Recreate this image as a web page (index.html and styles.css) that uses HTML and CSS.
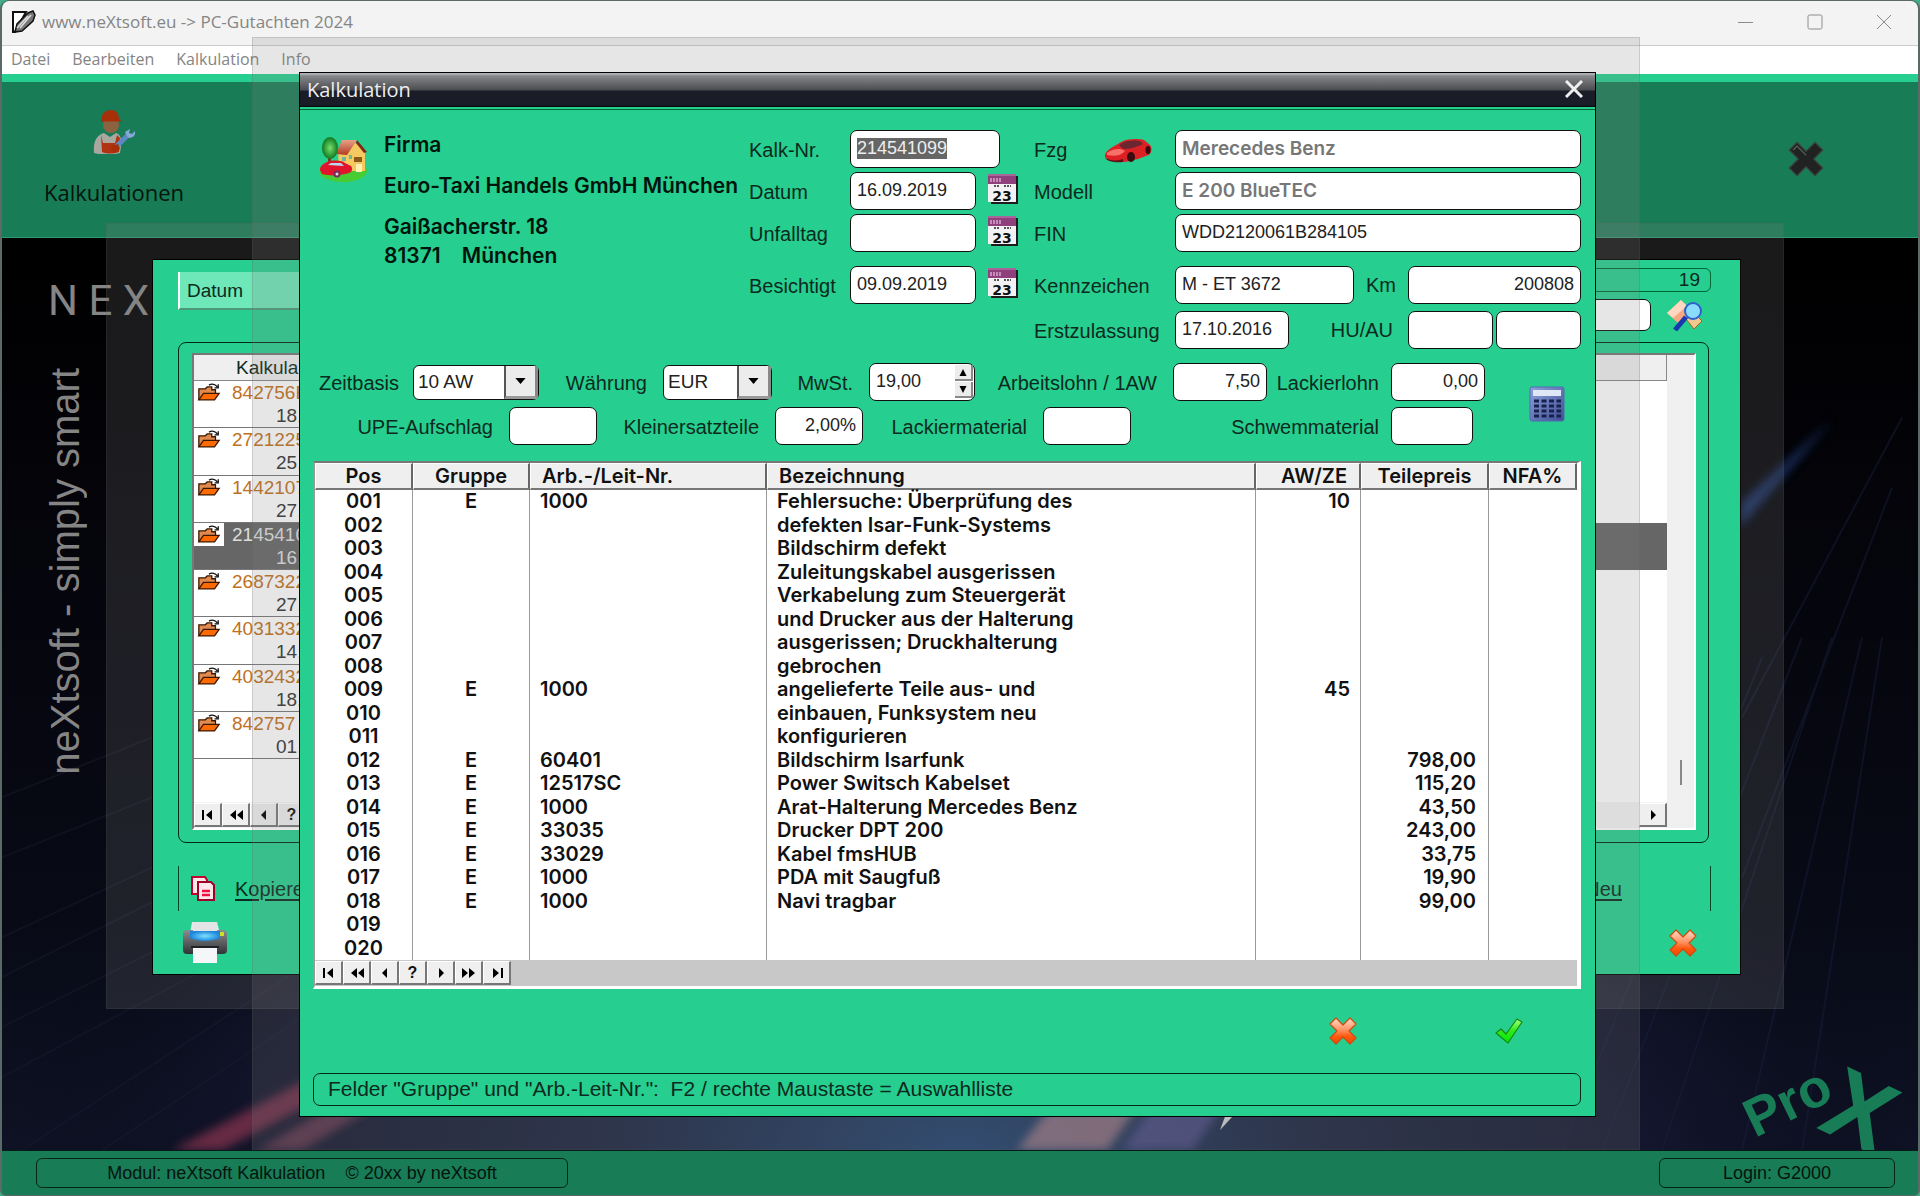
FILE: index.html
```html
<!DOCTYPE html>
<html lang="de">
<head>
<meta charset="utf-8">
<title>www.neXtsoft.eu -&gt; PC-Gutachten 2024</title>
<link rel="stylesheet" href="styles.css">
</head>
<body>
<svg class="defs" width="0" height="0" aria-hidden="true">
  <defs>
    <linearGradient id="gRed" x1="0" y1="0" x2="0" y2="1"><stop offset="0" stop-color="#ffe0cc"/><stop offset=".5" stop-color="#ff8a58"/><stop offset=".7" stop-color="#ff5a10"/><stop offset="1" stop-color="#f04800"/></linearGradient>
    <linearGradient id="gGreen" x1="0" y1="0" x2="0" y2="1"><stop offset="0" stop-color="#a8ff7a"/><stop offset=".5" stop-color="#2fe81c"/><stop offset="1" stop-color="#00e800"/></linearGradient>
    <linearGradient id="gCalc" x1="0" y1="0" x2="1" y2="1"><stop offset="0" stop-color="#8fa2dc"/><stop offset="1" stop-color="#3c4c94"/></linearGradient>
    <linearGradient id="gPrint" x1="0" y1="0" x2="0" y2="1"><stop offset="0" stop-color="#8a8c90"/><stop offset="1" stop-color="#303236"/></linearGradient>
    <linearGradient id="gRoof" x1="0" y1="0" x2="0" y2="1"><stop offset="0" stop-color="#e8a088"/><stop offset="1" stop-color="#b03c20"/></linearGradient>
    <radialGradient id="gTree"><stop offset="0" stop-color="#7ade6c"/><stop offset="1" stop-color="#0c7a20"/></radialGradient>
    <radialGradient id="gBlue"><stop offset="0" stop-color="#7fe0ff"/><stop offset="1" stop-color="#1c86dc"/></radialGradient>
    <symbol id="cross" viewBox="0 0 28 28"><path d="M7 1 L14 8 L21 1 L27 7 L20 14 L27 21 L21 27 L14 20 L7 27 L1 21 L8 14 L1 7 Z" fill="url(#gRed)" stroke="#d04a10" stroke-width="1.2" stroke-linejoin="round"/></symbol>
    <symbol id="cal" viewBox="0 0 30 30">
      <path d="M28 2h2v28H3v-2h25z" fill="#1e1a1e"/><rect width="28" height="28" fill="#f4f1f4"/><rect width="28" height="10" fill="#8e3f7c"/><path d="M0 0h28v2H0z" fill="#a8659a"/>
      <path d="M2 5h12M2 7h11" stroke="#d8a8cc" stroke-width="1.4" stroke-dasharray="2 1"/><path d="M6 12h6M16 12h7" stroke="#555" stroke-width="2" stroke-dasharray="2 1"/>
      <text x="14" y="27" text-anchor="middle" font-family="DejaVu Sans" font-weight="700" font-size="14" fill="#111">23</text></symbol>
    <symbol id="folder" viewBox="0 0 26 20"><path d="M2 18V6h7l2-2h5v3h4v4" fill="#e08a50" stroke="#3a1800" stroke-width="1.4"/><path d="M2 18l5-7h17l-5 7z" fill="#ff6a00" stroke="#3a1800" stroke-width="1.4"/><path d="M13 2c3-2 7-1 9 2M23 1v4h-4" fill="none" stroke="#111" stroke-width="1.4"/></symbol>
    <symbol id="first" viewBox="0 0 14 12"><path d="M1 1h2v10H1zM11 1v10L5 6z"/></symbol>
    <symbol id="rew" viewBox="0 0 14 12"><path d="M7 1v10L1 6zM14 1v10L8 6z"/></symbol>
    <symbol id="prev" viewBox="0 0 14 12"><path d="M9 1v10L4 6z"/></symbol>
    <symbol id="next" viewBox="0 0 14 12"><path d="M5 1v10l5-5z"/></symbol>
    <symbol id="fwd" viewBox="0 0 14 12"><path d="M0 1v10l6-5zM7 1v10l6-5z"/></symbol>
    <symbol id="last" viewBox="0 0 14 12"><path d="M3 1v10l6-5zM11 1h2v10h-2z"/></symbol>
  </defs>
</svg>
<div class="app">
  <header class="titlebar">
    <svg class="app-icon" width="24" height="24" viewBox="0 0 24 24"><path d="M1 2h13L3 22H1z" fill="#fff" stroke="#111" stroke-width="2"/><path d="M3 22l2-8L16 3l5-2 2 4-2 6L10 21z" fill="#777" stroke="#111" stroke-width="1.5"/><path d="M8 18L19 5M5 18L16 6" stroke="#ddd" stroke-width="1.5"/></svg>
    <span class="app-title">www.neXtsoft.eu -&gt; PC-Gutachten 2024</span>
    <div class="win-buttons">
      <button aria-label="Minimieren"><svg width="16" height="16" viewBox="0 0 16 16"><path d="M0 8.500h15"/></svg></button>
      <button aria-label="Maximieren"><svg width="16" height="16" viewBox="0 0 16 16"><rect x="1" y="1" width="14" height="14" rx="1.500"/></svg></button>
      <button aria-label="Schließen"><svg width="16" height="16" viewBox="0 0 16 16"><path d="M1 1l14 14M15 1L1 15"/></svg></button>
    </div>
  </header>
  <nav class="menubar"><a href="#">Datei</a><a href="#">Bearbeiten</a><a href="#">Kalkulation</a><a href="#">Info</a></nav>
  <div class="toolbar">
    <button class="tool">
      <svg width="44" height="44" viewBox="0 0 44 44"><path d="M2 43c-1-12 3-18 10-20l6 4 6-4c6 2 6 8 4 20-6 2-20 2-26 0z" fill="#a8a8a0"/><path d="M9 25l2 8h12l2-8 3 3-1 14c-6 2-12 2-17 0z" fill="#b03412"/><circle cx="19" cy="15" r="8" fill="#8a6440"/><path d="M9 12C9 3 14 0 19 0c6 0 8 5 8 9l3 2c-6 1-14 0-21 1z" fill="#a83008"/><path d="M24 37l12-12" stroke="#5c88c4" stroke-width="5"/><path d="M35 26l-2-4 5-3-1 4 3 1 3-3c1 5-3 7-6 7z" fill="#86a8d8"/><path d="M18 36l8-2 2 5-6 4z" fill="#a83008"/></svg>
      <span>Kalkulationen</span>
    </button>
    <button class="quit" aria-label="Beenden"><svg width="36" height="36" viewBox="0 0 28 28"><path d="M7 1 L14 8 L21 1 L27 7 L20 14 L27 21 L21 27 L14 20 L7 27 L1 21 L8 14 L1 7 Z" fill="#202322" stroke="#3a4440"/><path d="M4 7l3-3 7 7" stroke="#59625e" fill="none"/></svg></button>
  </div>
  <main class="desktop">
    <svg class="wallpaper" viewBox="0 0 1916 913" preserveAspectRatio="none" aria-hidden="true">
      <defs>
        <linearGradient id="w1" x1="0" y1="0" x2="0" y2="1"><stop offset="0" stop-color="#000"/><stop offset=".3" stop-color="#04040a"/><stop offset=".75" stop-color="#080a16"/><stop offset="1" stop-color="#0e1224"/></linearGradient>
        <radialGradient id="w2" cx=".5" cy="1" r=".5"><stop offset="0" stop-color="#20406c"/><stop offset=".35" stop-color="#1a2440"/><stop offset=".75" stop-color="#14162e" stop-opacity=".7"/><stop offset="1" stop-color="#080a16" stop-opacity="0"/></radialGradient>
        <filter id="soft"><feGaussianBlur stdDeviation="5"/></filter>
      </defs>
      <rect width="1916" height="913" fill="url(#w1)"/><rect width="1916" height="913" fill="url(#w2)"/>
      <g stroke="#1a1c30" stroke-width="2" opacity=".45"><path d="M0 700L300 560M0 740L300 590M0 790L300 640M0 840L300 680M20 913L300 730M100 913L300 780M0 620L150 560M0 560L150 500"/><path d="M1740 480L1900 180M1740 640L1890 250M1600 913L1800 400M1660 913L1830 400M1740 913L1860 400M1800 913L1880 400M1560 913L1760 420" stroke="#18203e"/></g>
      <g filter="url(#soft)">
        <path d="M170 913L300 845L340 850L220 913z" fill="#8c3550" opacity=".7"/><path d="M255 913L345 860L385 862L300 913z" fill="#9a4a62" opacity=".5"/>
        <path d="M1738 266L1830 182L1738 290z" fill="#2a4c9c" opacity=".6"/>
        <path d="M1015 913L1060 855L1150 850L1105 913z" fill="#c08890" opacity=".6"/><path d="M1120 913L1160 855L1230 855L1190 913z" fill="#54508c" opacity=".7"/>
      </g>
      <path d="M1218 893L1228 866L1230 880z" fill="#ccc"/>
    </svg>
    <div class="brand">N E X</div>
    <div class="slogan">neXtsoft - simply smart</div>
    <svg class="logo" width="180" height="150" viewBox="0 0 180 150" font-family="Liberation Sans" font-weight="700" fill="#187c56" role="img" aria-label="ProX"><text x="17" y="138" font-size="54" transform="rotate(-26 17 138)">Pro</text><text x="0" y="34" text-anchor="middle" font-size="100" transform="translate(122 111) rotate(25)">X</text></svg>
  </main>
  <footer class="statusbar"><div class="status-left">Modul: neXtsoft Kalkulation &nbsp;&nbsp; © 20xx by neXtsoft</div><div class="status-right">Login: G2000</div></footer>

  <div class="shade shade-list"></div>
  <section class="window list-window" aria-label="Kalkulationsliste">
    <div class="list-top">
      <div class="tab">Datum</div>
      <div class="search"><div class="count">19</div>
        <div class="search-row"><input type="text" aria-label="Suche"><svg width="38" height="32" viewBox="0 0 38 32"><path d="M1 14L15 1l12 12-14 12z" fill="#f8a880"/><path d="M15 1l6 6-14 12-6-5z" fill="#ffd8c0"/><path d="M20 20l8-6 8 8-8 8z" fill="#f2c890" stroke="#9a6a20"/><path d="M20 18L9 31" stroke="#1838b0" stroke-width="5"/><circle cx="27" cy="12" r="8" fill="#8adcff" stroke="#3060d0" stroke-width="2"/></svg></div></div>
    </div>
    <div class="frame">
      <div class="browse">
        <div class="browse-main">
          <table class="calcs">
            <thead><tr><th>Kalkula</th><th></th></tr></thead>
            <tbody>
              <tr><td><div class="rec"><svg><use href="#folder"/></svg><b>842756E</b><i>18.</i></div></td><td></td></tr>
              <tr><td><div class="rec"><svg><use href="#folder"/></svg><b>2721225</b><i>25.</i></div></td><td></td></tr>
              <tr><td><div class="rec"><svg><use href="#folder"/></svg><b>1442107</b><i>27.</i></div></td><td></td></tr>
              <tr class="selected"><td><div class="rec"><svg><use href="#folder"/></svg><b>2145410</b><i>16.</i></div></td><td></td></tr>
              <tr><td><div class="rec"><svg><use href="#folder"/></svg><b>2687322</b><i>27.</i></div></td><td></td></tr>
              <tr><td><div class="rec"><svg><use href="#folder"/></svg><b>4031332</b><i>14.</i></div></td><td></td></tr>
              <tr><td><div class="rec"><svg><use href="#folder"/></svg><b>4032432</b><i>18.</i></div></td><td></td></tr>
              <tr><td><div class="rec"><svg><use href="#folder"/></svg><b>842757</b><i>01.</i></div></td><td></td></tr>
            </tbody>
          </table>
          <div class="navbar"><button aria-label="Anfang"><svg><use href="#first"/></svg></button><button aria-label="Seite zurück"><svg><use href="#rew"/></svg></button><button aria-label="Zurück"><svg><use href="#prev"/></svg></button><button>?</button><button class="to-end" aria-label="Rechts"><svg><use href="#next"/></svg></button></div>
        </div>
        <div class="scroll"><span></span></div>
      </div>
    </div>
    <div class="actions"><svg width="24" height="25" viewBox="0 0 24 25"><path d="M1 1h13l2 3v14H1z" fill="#ffe8ec" stroke="#c00030" stroke-width="2"/><path d="M7 6h13l3 3v15H7z" fill="#ffe8ec" stroke="#a00028" stroke-width="2"/><path d="M11 15h8M11 19h8" stroke="#f01040" stroke-width="2.500"/></svg><a href="#">Kopiere</a><a href="#" class="neu">Neu</a></div>
    <div class="list-foot">
      <button aria-label="Drucken"><svg width="46" height="44" viewBox="0 0 46 44"><path d="M10 1h25l3 12H8z" fill="#e8eaec"/><rect x="1" y="9" width="44" height="24" rx="4" fill="url(#gPrint)"/><path d="M8 10h30v7c-8 4-22 4-30 0z" fill="url(#gBlue)"/><rect x="11" y="1" width="24" height="9" fill="#e2e4e6"/><rect x="38" y="11" width="4" height="4" fill="#c8e020"/><path d="M11 26h24v16H11z" fill="#f4f6f8"/><path d="M9 26h28" stroke="#222" stroke-width="2"/></svg></button>
      <button aria-label="Abbrechen"><svg width="28" height="28"><use href="#cross"/></svg></button>
    </div>
  </section>
  <div class="shade shade-dialog"></div>

  <section class="window dialog" role="dialog" aria-label="Kalkulation">
    <div class="dialog-title"><span>Kalkulation</span><button aria-label="Schließen"><svg width="18" height="18" viewBox="0 0 18 18"><path d="M1 1l16 16M17 1L1 17"/></svg></button></div>
    <form class="dialog-body" onsubmit="return false">
      <div class="head">
        <svg class="house" width="48" height="46" viewBox="0 0 48 46"><ellipse cx="24" cy="34" rx="24" ry="11" fill="#48cc34"/><path d="M19 14L24 5 34 4 46 14V34H20z" fill="#f6c860"/><path d="M17 17L23 3h15L28 18z" fill="url(#gRoof)"/><path d="M38 3l10 12-3 1-8-10" fill="#802818"/><path d="M35 20h8v5h-8z" fill="#8a5a18"/><path d="M37 27h6v8h-6z" fill="#fff0b0"/><path d="M23 20h4v4h-4zM30 18h3v4h-3z" fill="#68b8a0"/><rect x="9" y="18" width="3" height="9" fill="#6a4420"/><ellipse cx="11" cy="11" rx="8" ry="11" fill="url(#gTree)"/><path d="M1 33c0-4 3-6 7-8 5-2 14-2 18 1l6 3c2 3 1 6-2 7-9 3-20 3-27 1z" fill="#e0142c"/><path d="M9 28l3-2h10l3 3z" fill="#b8d8f0"/><circle cx="18" cy="37" r="3.500" fill="#7a2a58"/><circle cx="18" cy="37" r="1.500" fill="#ddd"/></svg>
        <address><p>Firma</p><p>Euro-Taxi Handels GmbH München</p><p>Gaißacherstr. 18<br>81371 &nbsp;&nbsp; München</p></address>
        <div class="dates">
          <label for="nr">Kalk-Nr.</label><input class="wide" id="nr" value="214541099">
          <label for="dat">Datum</label><input id="dat" value="16.09.2019"><button aria-label="Kalender"><svg><use href="#cal"/></svg></button>
          <label for="unf">Unfalltag</label><input id="unf"><button aria-label="Kalender"><svg><use href="#cal"/></svg></button>
          <label for="bes" class="gap">Besichtigt</label><input id="bes" class="gap" value="09.09.2019"><button class="gap" aria-label="Kalender"><svg><use href="#cal"/></svg></button>
        </div>
        <div class="car-fields">
          <label for="fzg">Fzg <svg class="car" width="48" height="25" viewBox="0 0 48 25"><path d="M1 19c-1-6 8-10 13-13C19 1 32 0 40 2l6 5c3 4 1 8-1 10-6 2-15 6-25 7-8 0-16-1-19-5z" fill="#dc2024"/><path d="M15 7c6-5 16-5 21-4l3 3c-6 3-12 5-20 5z" fill="#6c2630"/><path d="M3 15c6-5 14-5 18-2-5 6-12 5-18 4z" fill="#f87068"/><path d="M1 20c6 3 13 3 18 1v3c-6 1-15 0-18-4z" fill="#601014"/><ellipse cx="27" cy="19" rx="4" ry="5" fill="#3a0c10"/><ellipse cx="44" cy="12" rx="2.500" ry="4" fill="#3a0c10"/></svg></label><input id="fzg" class="strong" value="Merecedes Benz">
          <label for="mod">Modell</label><input id="mod" class="strong" value="E 200 BlueTEC">
          <label for="fin">FIN</label><input id="fin" value="WDD2120061B284105">
          <label for="kz" class="gap">Kennzeichen</label><div class="split gap plate"><input id="kz" value="M - ET 3672"><label for="km">Km</label><input id="km" class="num" value="200808"></div>
          <label for="erst" class="gap2">Erstzulassung</label><div class="split gap2 first-reg"><input id="erst" value="17.10.2016"><label for="hu">HU/AU</label><input id="hu"><input aria-label="AU"></div>
        </div>
      </div>
      <div class="rates">
        <div>
          <div class="rates-a">
            <label for="zb">Zeitbasis</label><span class="combo"><select id="zb"><option>10 AW</option></select><svg viewBox="0 0 12 7"><path d="M0 0h12L6 7z"/></svg></span>
            <label for="wg">Währung</label><span class="combo"><select id="wg"><option>EUR</option></select><svg viewBox="0 0 12 7"><path d="M0 0h12L6 7z"/></svg></span>
            <label for="mw">MwSt.</label><span class="spin"><input id="mw" value="19,00"><span><button aria-label="Mehr"><svg viewBox="0 0 8 8"><path d="M4 0l4 8H0z"/></svg></button><button aria-label="Weniger"><svg viewBox="0 0 8 8"><path d="M4 8l4-8H0z"/></svg></button></span></span>
            <label for="al">Arbeitslohn / 1AW</label><input id="al" class="num" value="7,50">
            <label for="ll" class="near">Lackierlohn</label><input id="ll" class="num" value="0,00">
          </div>
          <div class="rates-b">
            <label for="upe">UPE-Aufschlag</label><input id="upe"><label for="kt">Kleinersatzteile</label><input id="kt" class="num" value="2,00%"><label for="lm">Lackiermaterial</label><input id="lm"><label for="sm" class="near">Schwemmaterial</label><input id="sm">
          </div>
        </div>
        <button class="calc" aria-label="Rechner"><svg width="36" height="36" viewBox="0 0 36 36"><rect x="1" y="1" width="34" height="34" rx="2" fill="url(#gCalc)" stroke="#5468b0"/><rect x="4" y="4" width="28" height="6" fill="#dfe6f6"/><path d="M5 15h27M5 20h27M5 25h27M5 30h27" stroke="#18204c" stroke-width="3" stroke-dasharray="5 2.500"/></svg></button>
      </div>
      <div class="grid">
        <table class="positions">
          <colgroup><col class="c1"><col class="c2"><col class="c3"><col><col class="c5"><col class="c6"><col class="c7"></colgroup>
          <thead><tr><th>Pos</th><th>Gruppe</th><th class="l">Arb.-/Leit-Nr.</th><th class="l">Bezeichnung</th><th class="r">AW/ZE</th><th>Teilepreis</th><th>NFA%</th></tr></thead>
          <tbody>
            <tr><td>001</td><td>E</td><td>1000</td><td>Fehlersuche: Überprüfung des</td><td>10</td><td></td><td></td></tr>
            <tr><td>002</td><td></td><td></td><td>defekten Isar-Funk-Systems</td><td></td><td></td><td></td></tr>
            <tr><td>003</td><td></td><td></td><td>Bildschirm defekt</td><td></td><td></td><td></td></tr>
            <tr><td>004</td><td></td><td></td><td>Zuleitungskabel ausgerissen</td><td></td><td></td><td></td></tr>
            <tr><td>005</td><td></td><td></td><td>Verkabelung zum Steuergerät</td><td></td><td></td><td></td></tr>
            <tr><td>006</td><td></td><td></td><td>und Drucker aus der Halterung</td><td></td><td></td><td></td></tr>
            <tr><td>007</td><td></td><td></td><td>ausgerissen; Druckhalterung</td><td></td><td></td><td></td></tr>
            <tr><td>008</td><td></td><td></td><td>gebrochen</td><td></td><td></td><td></td></tr>
            <tr><td>009</td><td>E</td><td>1000</td><td>angelieferte Teile aus- und</td><td>45</td><td></td><td></td></tr>
            <tr><td>010</td><td></td><td></td><td>einbauen, Funksystem neu</td><td></td><td></td><td></td></tr>
            <tr><td>011</td><td></td><td></td><td>konfigurieren</td><td></td><td></td><td></td></tr>
            <tr><td>012</td><td>E</td><td>60401</td><td>Bildschirm Isarfunk</td><td></td><td>798,00</td><td></td></tr>
            <tr><td>013</td><td>E</td><td>12517SC</td><td>Power Switsch Kabelset</td><td></td><td>115,20</td><td></td></tr>
            <tr><td>014</td><td>E</td><td>1000</td><td>Arat-Halterung Mercedes Benz</td><td></td><td>43,50</td><td></td></tr>
            <tr><td>015</td><td>E</td><td>33035</td><td>Drucker DPT 200</td><td></td><td>243,00</td><td></td></tr>
            <tr><td>016</td><td>E</td><td>33029</td><td>Kabel fmsHUB</td><td></td><td>33,75</td><td></td></tr>
            <tr><td>017</td><td>E</td><td>1000</td><td>PDA mit Saugfuß</td><td></td><td>19,90</td><td></td></tr>
            <tr><td>018</td><td>E</td><td>1000</td><td>Navi tragbar</td><td></td><td>99,00</td><td></td></tr>
            <tr><td>019</td><td></td><td></td><td></td><td></td><td></td><td></td></tr>
            <tr><td>020</td><td></td><td></td><td></td><td></td><td></td><td></td></tr>
          </tbody>
        </table>
        <div class="navbar"><button aria-label="Anfang"><svg><use href="#first"/></svg></button><button aria-label="Seite zurück"><svg><use href="#rew"/></svg></button><button aria-label="Zurück"><svg><use href="#prev"/></svg></button><button>?</button><button aria-label="Weiter"><svg><use href="#next"/></svg></button><button aria-label="Seite vor"><svg><use href="#fwd"/></svg></button><button aria-label="Ende"><svg><use href="#last"/></svg></button></div>
      </div>
      <div class="confirm">
        <button aria-label="Abbrechen"><svg width="28" height="28"><use href="#cross"/></svg></button>
        <button aria-label="OK"><svg width="28" height="26" viewBox="0 0 28 26"><path d="M1 15l5-4 5 5L22 1l5 3-14 21z" fill="url(#gGreen)" stroke="#128a10" stroke-width="1.200" stroke-linejoin="round"/></svg></button>
      </div>
      <div class="hint">Felder "Gruppe" und "Arb.-Leit-Nr.":&nbsp; F2 / rechte Maustaste = Auswahlliste</div>
    </form>
  </section>
</div>
<script src="script.js"></script>
</body>
</html>
```
FILE: script.js
```js
// Open the dialog with the number ready to be overwritten.
var nr = document.getElementById('nr');
nr.focus();
nr.select();
```
FILE: styles.css
```css
:root {
  --green: #26cf8f;
  --dark: #187c56;
  --ui: "Liberation Sans", Arial, sans-serif;
  --strong: Inter, "Liberation Sans", sans-serif;
  --sys: "Open Sans", "Noto Sans", sans-serif;
}
* { box-sizing: border-box; }
body { margin: 0; background: #3fae86; font: 19px/24px var(--ui); color: #0c2a20; }
button { padding: 0; border: 0; background: none; font: inherit; color: inherit; display: flex; align-items: center; justify-content: center; }
svg { display: block; flex: none; }
.defs { position: absolute; }

.app { position: relative; display: flex; flex-direction: column; min-height: 100vh; border: 1px solid #5a6a66; border-width: 1px 2px; border-radius: 9px 9px 6px 6px; overflow: hidden; background: var(--dark); }
.titlebar { display: flex; align-items: center; height: 45px; padding: 0 26px 2px 10px; background: #f3f3f3; border-bottom: 1px solid #ccc; }
.app-icon { margin-right: 6px; }
.app-title { font: 17px/24px var(--sys); color: #858585; flex: 1; }
.win-buttons { display: flex; gap: 53px; }
.win-buttons svg { fill: none; stroke: #8c8c8c; }
.menubar { display: flex; gap: 22px; height: 28px; padding: 0 9px; background: #fff; font: 16px/26px var(--sys); }
.menubar a { color: #848484; text-decoration: none; }
.toolbar { display: flex; justify-content: space-between; height: 164px; padding: 28px 94px 0 42px; background: var(--dark); border-top: 8px solid var(--green); border-bottom: 1px solid #2f9a70; }
.tool { flex-direction: column; justify-content: flex-start; gap: 25px; font: 22px/26px var(--sys); color: #04140e; }
.quit { height: 98px; align-items: center; }

.desktop { position: relative; flex: 1; overflow: hidden; background: #000; }
.wallpaper { position: absolute; inset: 0; width: 100%; height: 100%; }
.brand { position: absolute; left: 46px; top: 39px; font: 42px/48px Roboto, sans-serif; color: #858585; white-space: nowrap; }
.slogan { position: absolute; left: 41px; top: 130px; font: 40px/44px var(--ui); color: #858585; white-space: nowrap; writing-mode: vertical-rl; transform: rotate(180deg); }
.logo { position: absolute; right: 0; bottom: 0; }
.statusbar { display: flex; justify-content: space-between; height: 45px; padding: 7px 23px 7px 34px; background: var(--dark); border-top: 1px solid #061c14; font-size: 18px; line-height: 28px; color: #04140e; }
.statusbar div { border: 1px solid #06241a; border-radius: 6px; text-align: center; }
.status-left { width: 532px; }
.status-right { width: 236px; }

.shade { position: absolute; background: rgba(128, 128, 128, .2); border: 1px solid rgba(90, 90, 90, .2); }
.shade-list { left: 104px; right: 134px; top: 222px; height: 786px; }
.shade-dialog { left: 250px; right: 278px; top: 36px; bottom: 45px; }
.window { position: absolute; border: 1px solid #000; background: var(--green); }

.list-window { left: 150px; right: 177px; top: 258px; height: 716px; padding: 8px 29px 0 25px; }
.list-top { display: flex; justify-content: space-between; height: 74px; }
.tab { width: 400px; height: 38px; margin-top: 4px; padding-left: 7px; line-height: 38px; background: #6ee7b9; border-left: 2px solid #fff; border-bottom: 2px solid #4a9878; }
.search { width: 460px; }
.count { height: 24px; padding-right: 10px; border: 1px solid #063; border-radius: 6px; text-align: right; line-height: 22px; }
.search-row { display: flex; gap: 15px; margin: 7px 7px 0 0; align-items: center; }
.search-row input { flex: 1; min-width: 0; height: 32px; }
.frame { height: 501px; margin-right: 2px; padding: 10px 12px 12px 13px; border: 1px solid #04271a; border-radius: 8px; }
.browse { display: flex; height: 477px; border: 2px solid #fff; border-top-color: #777; border-left-color: #777; background: #fff; }
.browse-main { flex: 1; display: flex; flex-direction: column; justify-content: space-between; min-width: 0; }
.calcs { width: 100%; height: 404px; border-collapse: separate; border-spacing: 0; table-layout: fixed; }
.calcs th { height: 26px; padding: 0 0 0 42px; text-align: left; font-weight: 400; background: #efefef; border: 1px solid #888; border-top: 0; border-left: 0; }
.calcs td { padding: 0; }
.calcs td:first-child { border-bottom: 1px solid #777; }
.rec { display: grid; grid-template-columns: 30px 80px; line-height: 23px; }
.rec svg { width: 30px; height: 23px; padding: 2px 3px; }
.rec b { padding-left: 8px; font-weight: 400; color: #c0701c; }
.rec i { grid-column: 2; padding-left: 52px; font-style: normal; color: #333; }
.selected td { background: #666; }
.selected b, .selected i { color: #ddd; }
.selected svg { background: #fff; }
.scroll { width: 27px; background: #f0f0f0; display: flex; align-items: flex-end; justify-content: center; padding-bottom: 43px; }
.scroll span { width: 2px; height: 25px; background: #888; }
.navbar { display: flex; height: 26px; flex: none; background: #c8c8c8; padding: 1px 0; }
.navbar button { width: 28px; font-size: 16px; font-weight: 700; color: #111; background: #efefef; border: 1px solid #fff; border-right: 2px solid #777; border-bottom: 2px solid #777; }
.navbar svg { width: 14px; height: 12px; }
.browse .navbar { background: #f4f4f4; }
.browse .to-end { margin-left: auto; }
.actions { display: flex; align-items: center; height: 45px; margin: 23px 0 0; padding: 0 88px 0 12px; border: 1px solid #042; border-width: 0 1px; font-size: 20px; }
.actions a { margin-left: 20px; color: inherit; text-underline-offset: 3px; }
.actions .neu { margin-left: auto; }
.list-foot { display: flex; justify-content: space-between; align-items: center; padding: 10px 14px 0 4px; }

.dialog { left: 297px; right: 322px; top: 71px; min-height: 1044px; }
.dialog-title { display: flex; justify-content: space-between; align-items: center; height: 37px; padding: 0 12px 0 7px; background: linear-gradient(#b0b1b4 0 1px, #86878a 3px, #4b4c50 17px, #1a1c27 18px, #1a1c27 32px, #05060c 34px, var(--green) 34px 36px, #063 36px); font: 20px/32px var(--sys); color: #eee; }
.dialog-title span { padding-bottom: 4px; }
.dialog-title button { padding-bottom: 6px; }
.dialog-title svg { stroke: #eee; stroke-width: 3; }
.dialog-body { padding: 20px 14px 10px 13px; }
input, select { display: block; width: 100%; height: 38px; margin: 0; padding: 0 6px 1px; border: 1px solid #111; border-radius: 7px; background: #fff; font: 18px/24px var(--ui); color: #222; outline: 0; appearance: none; }
input::selection { background: #666; color: #eee; }
input.num { text-align: right; }
input.strong { font: 600 19px/24px var(--strong); color: #777; }
label { padding-top: 2px; font-size: 20px; }

.head { display: grid; grid-template-columns: 65px 1fr 285px 547px; padding-left: 6px; }
.house { margin-top: 7px; }
address { font: 600 21px/29px var(--strong); color: #00140c; white-space: nowrap; }
address p { margin: 0 0 12px; }
.dates { display: grid; grid-template-columns: 101px 126px 30px; grid-auto-rows: auto; align-items: center; align-content: start; row-gap: 4px; }
.dates .wide { width: 150px; grid-column: 2 / 4; }
.dates button { margin: 0 -12px 0 12px; height: 38px; padding-bottom: 4px; }
.dates button svg { width: 30px; height: 30px; }
.car-fields { display: grid; grid-template-columns: 141px 1fr; align-items: center; align-content: start; row-gap: 4px; }
.car-fields > label { display: flex; }
.car { margin-left: 37px; }
.dates .gap, .car-fields .gap { margin-top: 10px; }
.car-fields .gap2 { margin-top: 3px; }
.split { display: grid; }
.plate { grid-template-columns: 1fr 54px 173px; }
.first-reg { grid-template-columns: 114px 1fr 85px 85px; column-gap: 3px; }
.split label { text-align: right; padding: 7px 12px 0 0; }

.rates { display: flex; justify-content: space-between; align-items: center; padding: 14px 16px 0 6px; }
.rates label { text-align: right; padding: 2px 16px 0 0; white-space: nowrap; }
.rates .near { padding-right: 12px; }
.rates-a, .rates-b { display: grid; align-items: center; }
.rates-a { grid-template-columns: 94px 126px 124px 109px 97px 106px 198px 94px 124px 94px; margin-bottom: 6px; }
.rates-b { grid-template-columns: 190px 88px 178px 88px 180px 88px 260px 82px; }
.combo, .spin { position: relative; }
.combo select { height: 35px; border-radius: 6px; padding-bottom: 0; padding-left: 4px; font-size: 19px; }
.combo svg { position: absolute; right: 1px; top: 1px; width: 34px; height: 33px; padding: 12px 8px; background: #ececec; border-left: 2px solid #555; border-right: 3px solid #888; border-bottom: 3px solid #999; }
.spin > span { position: absolute; right: 2px; top: 2px; display: grid; gap: 1px; }
.spin button { width: 18px; height: 16px; background: #ececec; border-right: 2px solid #888; border-bottom: 2px solid #888; }
.spin button svg { width: 8px; height: 7px; }

.grid { margin-top: 16px; border: 2px solid #777; border-color: #777 #fff #fff #999; border-bottom-width: 3px; border-right-width: 4px; background: #fff; }
.positions { width: 100%; height: 497px; table-layout: fixed; border-collapse: separate; border-spacing: 0; font: 600 20px/23px var(--strong); color: #111; }
.positions .c1 { width: 98px; }
.positions .c2 { width: 117px; }
.positions .c3 { width: 237px; }
.positions .c5 { width: 105px; }
.positions .c6 { width: 128px; }
.positions .c7 { width: 88px; }
.positions th { height: 27px; padding: 0; font-weight: 600; background: #efefef; border: 1px solid #fff; border-right: 2px solid #666; border-bottom: 2px solid #777; }
.positions th.l { padding-left: 11px; text-align: left; }
.positions th.r { padding-right: 12px; text-align: right; }
.positions td { padding: 0 10px; border-right: 1px solid #999; white-space: nowrap; }
.positions td:last-child { border-right: 0; }
.positions td:nth-child(-n+2) { text-align: center; padding: 0; }
.positions td:nth-child(5) { text-align: right; }
.positions td:nth-child(6) { text-align: right; padding-right: 12px; }
.confirm { display: flex; justify-content: flex-end; align-items: center; gap: 138px; height: 84px; padding-right: 58px; }
.hint { height: 33px; padding-left: 14px; border: 1px solid #04271a; border-radius: 7px; font-size: 21px; line-height: 30px; }
```
